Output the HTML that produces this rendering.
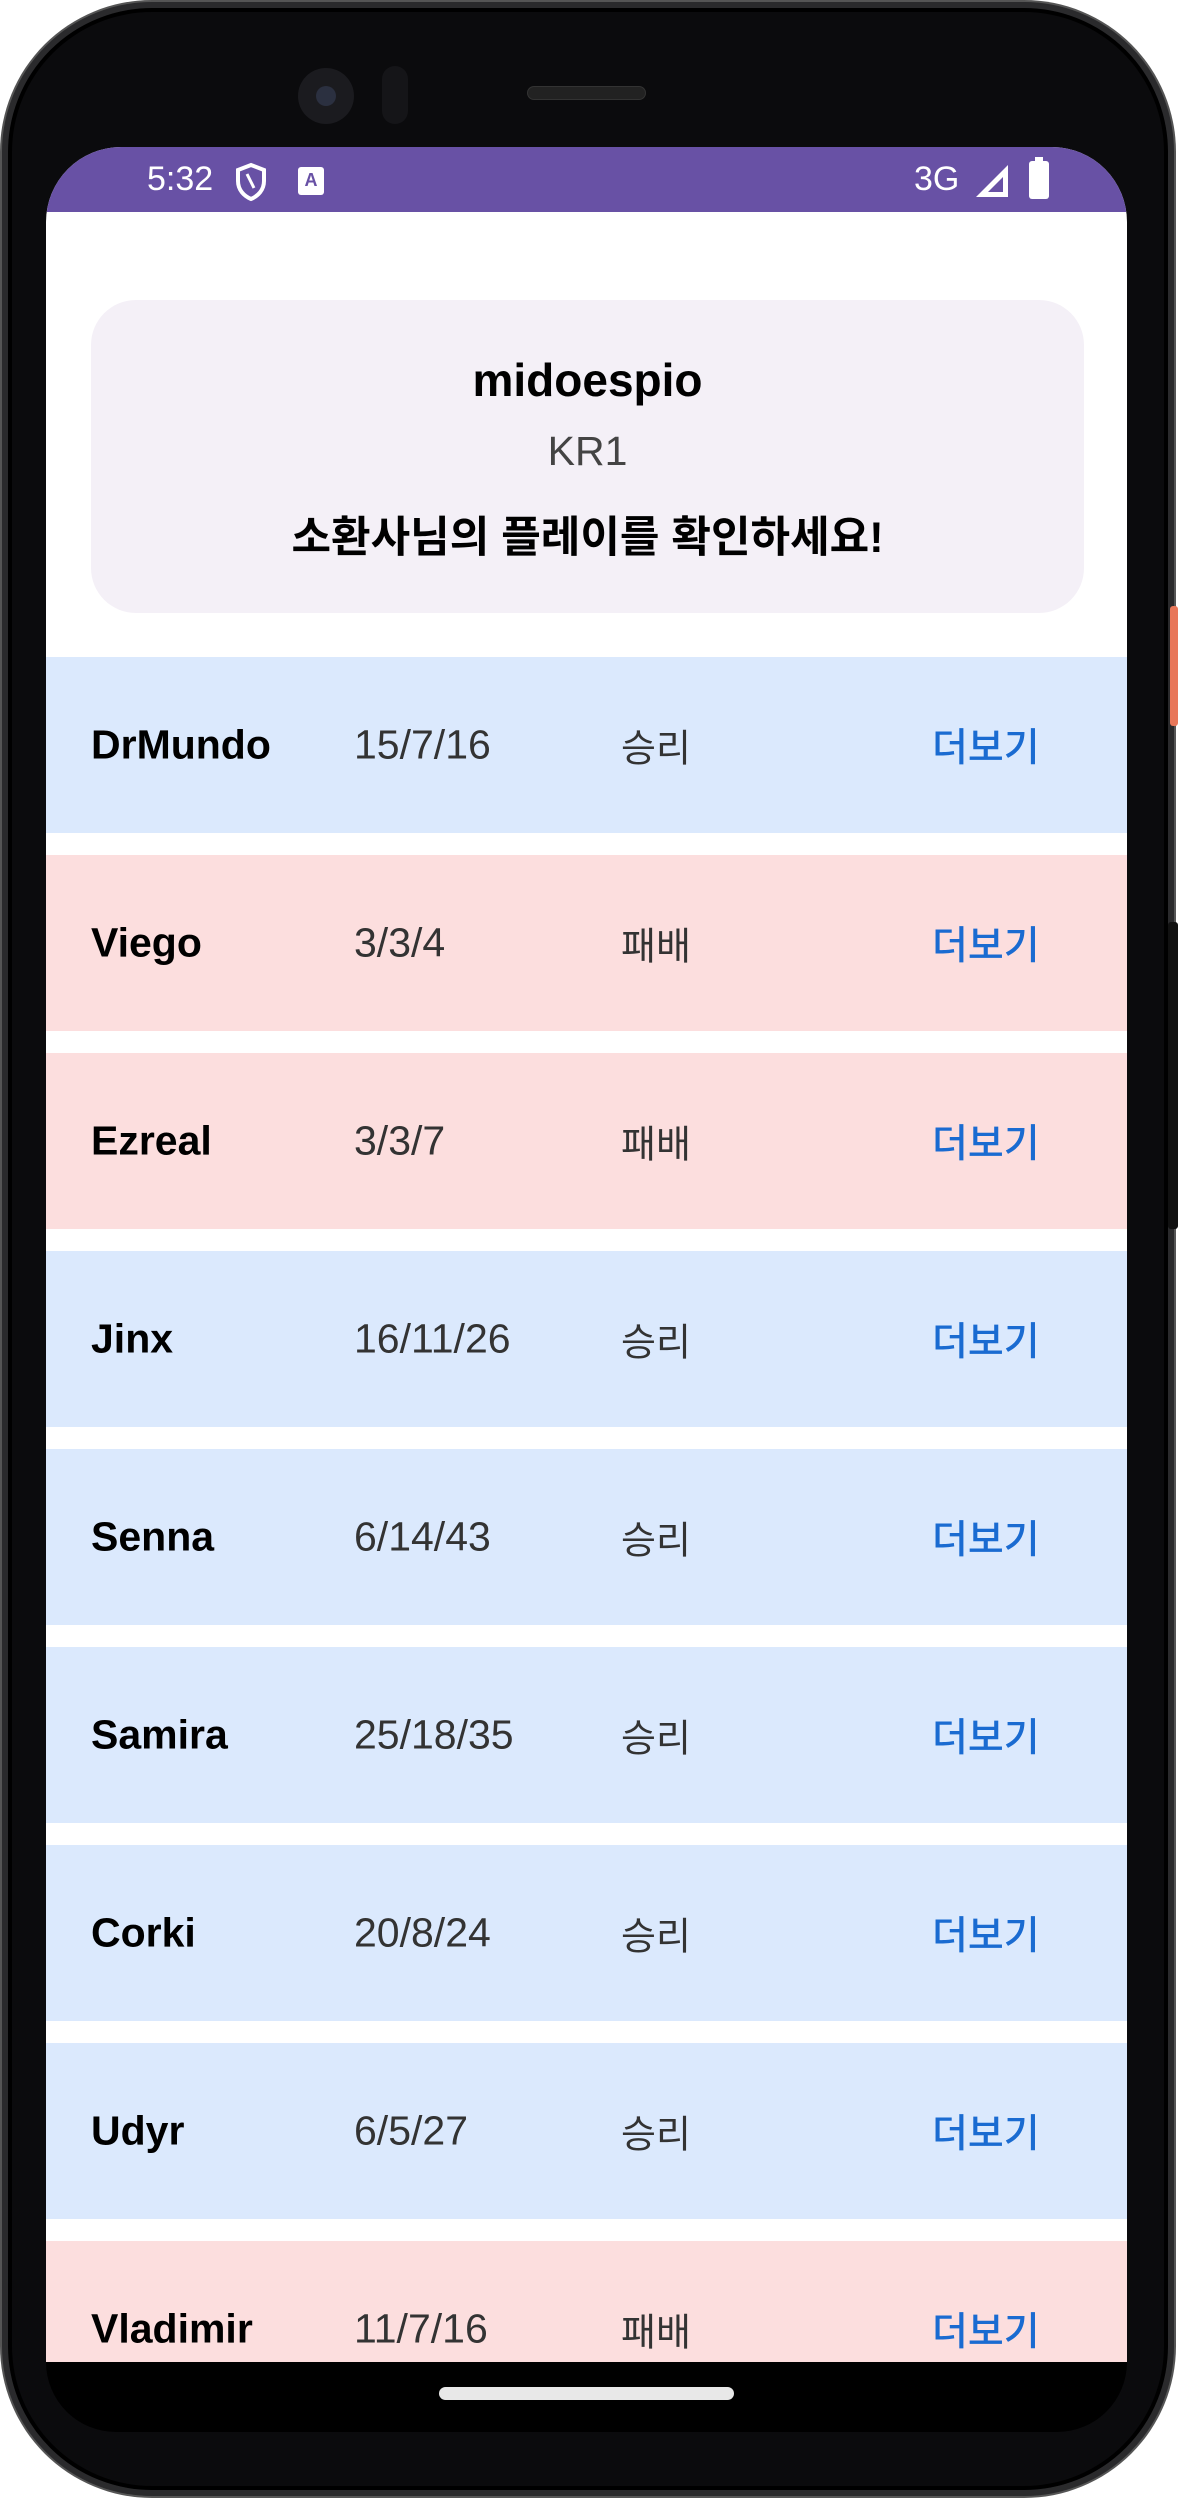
<!DOCTYPE html>
<html><head><meta charset="utf-8"><style>
*{margin:0;padding:0;box-sizing:border-box}
body{width:1178px;height:2498px;background:#fff;position:relative;overflow:hidden;font-family:"Liberation Sans","Noto Sans CJK KR",sans-serif}
.abs{position:absolute}
.phone{left:2px;top:2px;width:1172px;height:2494px;border-radius:150px;background:#0b0b0d;border:6px solid #2a2a2c;box-shadow:inset 0 0 0 4px #000,0 0 0 2px #555}
.screen{left:46px;top:147px;width:1081px;height:2215px;background:#fff;border-radius:75px 75px 0 0;overflow:hidden}
.sb{left:0;top:0;width:1081px;height:65px;background:#6851a5;color:#fff;font-size:34px}
.card{left:45px;top:153px;width:993px;height:313px;background:#f4f0f7;border-radius:45px;text-align:center}
.row{left:0;width:1081px;height:176px;font-size:38px}
.row span{position:absolute;top:50%;transform:translateY(-50%);white-space:nowrap}
.n{left:45px;font-weight:bold;color:#000;font-size:41px}
.k{left:308px;color:#333;font-size:41px}
.r{left:575px;color:#333}
.m{left:886px;color:#1a6bd1;font-size:39px;font-family:"Noto Sans CJK KR",sans-serif;font-weight:500}
.blue{background:#dbe9fd}.red{background:#fcdede}
</style></head><body>
<div class="abs phone"></div>
<div class="abs" style="left:1170px;top:606px;width:8px;height:120px;background:#e8775a;border-radius:3px"></div>
<div class="abs" style="left:1168px;top:922px;width:10px;height:307px;background:#111;border-radius:3px"></div>
<div class="abs" style="left:298px;top:68px;width:56px;height:56px;border-radius:50%;background:#1b1b1f"></div>
<div class="abs" style="left:316px;top:86px;width:20px;height:20px;border-radius:50%;background:#2b3040"></div>
<div class="abs" style="left:382px;top:66px;width:26px;height:58px;border-radius:13px;background:#151518"></div>
<div class="abs" style="left:527px;top:86px;width:119px;height:14px;border-radius:7px;background:#222;border:1px solid #333"></div>
<div class="abs screen">
 <div class="abs sb">
  <div class="abs" style="left:101px;top:13px">5:32</div>
  <svg class="abs" style="left:188px;top:15px" width="34" height="40" viewBox="0 0 34 40"><path d="M17 3 L30 8 V19 C30 28 24 34 17 37 C10 34 4 28 4 19 V8 Z" fill="none" stroke="#fff" stroke-width="4"/><path d="M13 12 L20 26" stroke="#fff" stroke-width="3"/></svg>
  <div class="abs" style="left:252px;top:20px;width:26px;height:28px;background:#fff;border-radius:3px;color:#6851a5;font-size:18px;font-weight:bold;text-align:center;line-height:26px">A</div>
  <div class="abs" style="left:868px;top:13px">3G</div>
  <svg class="abs" style="left:928px;top:16px" width="36" height="36"><path d="M34 2 V34 H2 Z" fill="#fff"/><path d="M29 14 V29 H14 Z" fill="#6851a5"/></svg>
  <div class="abs" style="left:983px;top:14px;width:20px;height:38px;background:#fff;border-radius:3px"></div>
  <div class="abs" style="left:989px;top:10px;width:8px;height:6px;background:#fff"></div>
 </div>
 <div class="abs card">
  <div style="margin-top:52px;font-size:46px;font-weight:bold;color:#000;line-height:56px">midoespio</div>
  <div style="margin-top:18px;font-size:41px;color:#444;line-height:50px">KR1</div>
  <div style="margin-top:34px;font-size:43px;font-weight:bold;color:#000;line-height:56px">소환사님의 플레이를 확인하세요!</div>
 </div>
 <div class="abs row blue" style="top:510px"><span class="n">DrMundo</span><span class="k">15/7/16</span><span class="r">승리</span><span class="m">더보기</span></div>
 <div class="abs row red" style="top:708px"><span class="n">Viego</span><span class="k">3/3/4</span><span class="r">패배</span><span class="m">더보기</span></div>
 <div class="abs row red" style="top:906px"><span class="n">Ezreal</span><span class="k">3/3/7</span><span class="r">패배</span><span class="m">더보기</span></div>
 <div class="abs row blue" style="top:1104px"><span class="n">Jinx</span><span class="k">16/11/26</span><span class="r">승리</span><span class="m">더보기</span></div>
 <div class="abs row blue" style="top:1302px"><span class="n">Senna</span><span class="k">6/14/43</span><span class="r">승리</span><span class="m">더보기</span></div>
 <div class="abs row blue" style="top:1500px"><span class="n">Samira</span><span class="k">25/18/35</span><span class="r">승리</span><span class="m">더보기</span></div>
 <div class="abs row blue" style="top:1698px"><span class="n">Corki</span><span class="k">20/8/24</span><span class="r">승리</span><span class="m">더보기</span></div>
 <div class="abs row blue" style="top:1896px"><span class="n">Udyr</span><span class="k">6/5/27</span><span class="r">승리</span><span class="m">더보기</span></div>
 <div class="abs row red" style="top:2094px"><span class="n">Vladimir</span><span class="k">11/7/16</span><span class="r">패배</span><span class="m">더보기</span></div>
</div>
<div class="abs" style="left:46px;top:2362px;width:1081px;height:70px;background:#000;border-radius:0 0 70px 70px"></div>
<div class="abs" style="left:439px;top:2387px;width:295px;height:13px;border-radius:7px;background:#e8e8e8"></div>
</body></html>
